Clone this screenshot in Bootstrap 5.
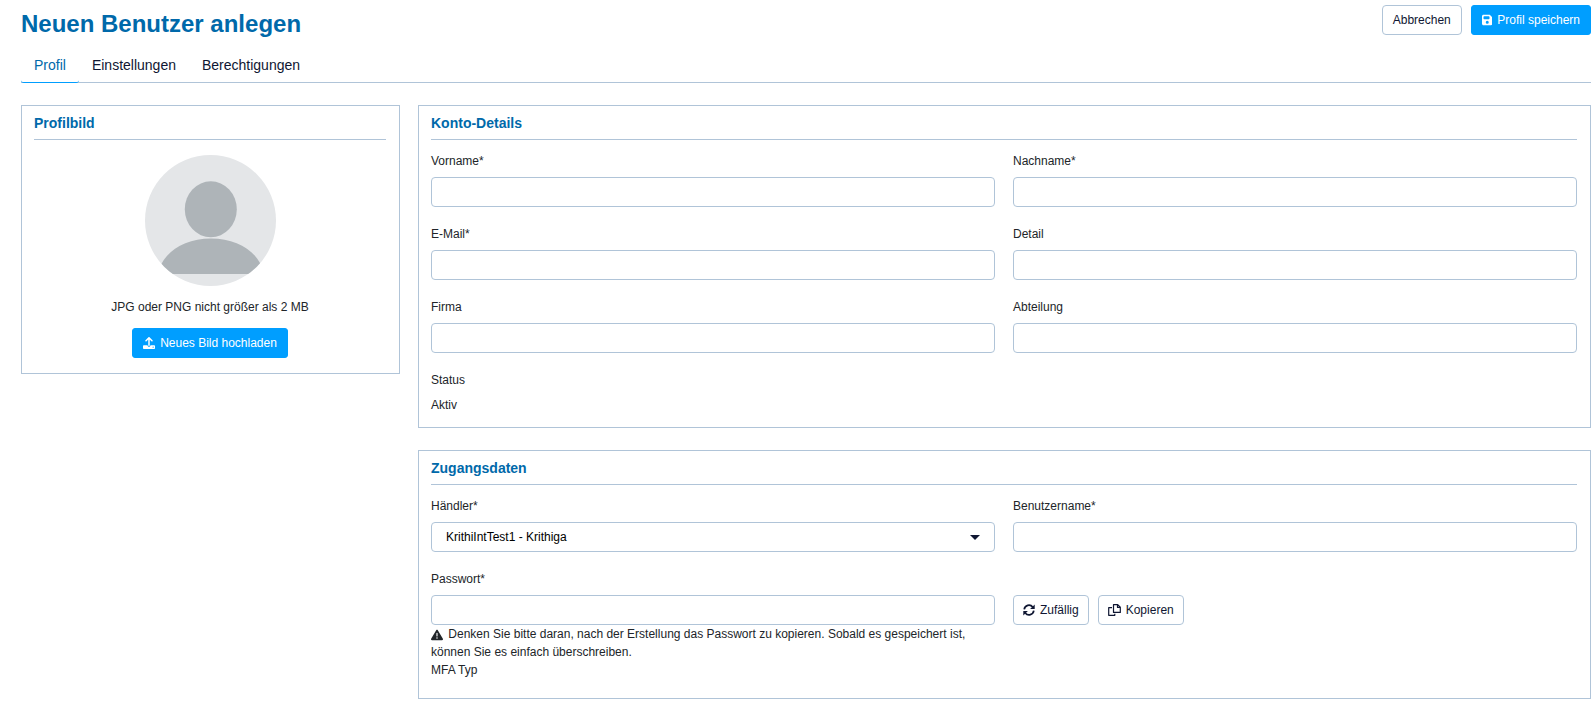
<!DOCTYPE html>
<html lang="de">
<head>
<meta charset="utf-8">
<meta name="viewport" content="width=device-width, initial-scale=1">
<title>Neuen Benutzer anlegen</title>
<link href="https://cdn.jsdelivr.net/npm/bootstrap@5.3.0/dist/css/bootstrap.min.css" rel="stylesheet">
<style>
  :root { --line: #b0c4d8; --brand: #0069aa; --accent: #009eff; --ink: #0f1632; }
  body { font-family: "Liberation Sans", Arial, sans-serif; font-size: 12px; line-height: 18px; color: #212529; }
  .page { padding: 5px 5px 20px 21px; }
  .page-title { font-size: 24px; line-height: 38px; font-weight: 700; color: var(--brand); }
  .btn { --bs-btn-font-size: 12px; --bs-btn-line-height: 18px; --bs-btn-padding-y: 5px; --bs-btn-padding-x: 10px; --bs-btn-border-radius: 4px; display: inline-flex; align-items: center; gap: 5px; }
  .btn-line { --bs-btn-color: var(--ink); --bs-btn-bg: #fff; --bs-btn-border-color: var(--line); --bs-btn-hover-border-color: var(--accent); }
  .btn-accent { --bs-btn-color: #fff; --bs-btn-bg: var(--accent); --bs-btn-border-color: var(--accent); --bs-btn-hover-color: #fff; --bs-btn-hover-bg: #008ae0; --bs-btn-border-radius: 3px; }
  .icon { height: 12px; fill: currentColor; flex: none; }
  .actions { gap: 9px; }
  .tabs { --bs-nav-tabs-border-width: 1px; --bs-nav-tabs-border-color: var(--line); --bs-nav-tabs-border-radius: 3px; margin-bottom: 22px; }
  .tabs .nav-link { border-width: 0 0 1px; padding: 12px 13px 6px; font-size: 14px; line-height: 21px; color: var(--ink); border-radius: 3px; }
  .tabs .nav-link.active { color: var(--brand); background: none; border-color: var(--accent); }
  .cols { --bs-gutter-x: 18px; }
  .panel { border: 1px solid var(--line); padding: 8px 13px 13px 12px; }
  .panel + .panel { margin-top: 22px; }
  .panel-title { font-size: 14px; line-height: 18px; font-weight: 700; color: var(--brand); padding-bottom: 7px; border-bottom: 1px solid var(--line); margin-bottom: 12px; }
  .fields { --bs-gutter-x: 18px; --bs-gutter-y: 18px; }
  .form-label { display: block; margin-bottom: 7px; }
  .form-control, .form-select { height: 30px; font-size: 12px; line-height: 18px; padding: 5px 14px; border-color: var(--line); border-radius: 4px; }
  .form-select { color: #000; background-image: url("data:image/svg+xml,%3Csvg xmlns='http://www.w3.org/2000/svg' viewBox='0 0 10 5'%3E%3Cpath fill='%230f1632' d='M0 0h10L5 5z'/%3E%3C/svg%3E"); background-size: 10px 5px; background-position: right 14px center; }
  .avatar { width: 131px; height: 131px; margin: 3px 0 12px; }
  .upload { margin: 12px 0 2px; }
  .hint-icon { margin-right: 2px; }
  .mfa { margin-bottom: 6px; }
  .pw-actions { padding-top: 25px; }
  .pw-actions .btn { --bs-btn-padding-x: 9px; }
</style>
</head>
<body>
<main class="page">
  <header class="d-flex justify-content-between align-items-start">
    <h1 class="page-title mb-0">Neuen Benutzer anlegen</h1>
    <div class="actions d-flex">
      <button type="button" class="btn btn-line">Abbrechen</button>
      <button type="submit" form="user-form" class="btn btn-accent">
        <svg class="icon" viewBox="0 0 448 512" aria-hidden="true"><path d="M64 32C28.700 32 0 60.700 0 96V416c0 35.300 28.700 64 64 64H384c35.300 0 64-28.700 64-64V173.300c0-17-6.700-33.300-18.700-45.300L352 50.700C340 38.700 323.700 32 306.700 32H64zm0 96c0-17.700 14.300-32 32-32H288c17.700 0 32 14.300 32 32v64c0 17.700-14.300 32-32 32H96c-17.700 0-32-14.300-32-32V128zM224 288a64 64 0 1 1 0 128 64 64 0 1 1 0-128z"/></svg>
        Profil speichern
      </button>
    </div>
  </header>

  <nav>
    <ul class="nav nav-tabs tabs">
      <li class="nav-item"><a class="nav-link active" aria-current="page" href="#profil">Profil</a></li>
      <li class="nav-item"><a class="nav-link" href="#einstellungen">Einstellungen</a></li>
      <li class="nav-item"><a class="nav-link" href="#berechtigungen">Berechtigungen</a></li>
    </ul>
  </nav>

  <form id="user-form" class="row cols align-items-start">
    <div class="col-3">
      <section class="panel">
        <h2 class="panel-title">Profilbild</h2>
        <div class="d-flex flex-column align-items-center">
          <svg class="avatar" viewBox="0 0 131 131" role="img" aria-label="Profilbild">
            <defs><clipPath id="disc"><circle cx="65.500" cy="65.500" r="65.500"/></clipPath></defs>
            <g clip-path="url(#disc)">
              <path fill="#e4e6e8" d="M0 0h131v131H0z"/>
              <ellipse cx="65.800" cy="54.300" rx="26" ry="28" fill="#aeb4b8"/>
              <path fill="#aeb4b8" d="M13 119C17 98 38 83.500 66 83.500S115 98 119 119z"/>
            </g>
          </svg>
          <span>JPG oder PNG nicht größer als 2 MB</span>
          <button type="button" class="btn btn-accent upload">
            <svg class="icon" viewBox="0 0 512 512" aria-hidden="true"><path d="M288 109.300V352c0 17.700-14.300 32-32 32s-32-14.300-32-32V109.300l-73.400 73.400c-12.500 12.500-32.800 12.500-45.300 0s-12.500-32.800 0-45.300l128-128c12.500-12.500 32.800-12.500 45.300 0l128 128c12.500 12.500 12.500 32.800 0 45.300s-32.800 12.500-45.300 0L288 109.300zM32 352H192c0 35.300 28.700 64 64 64s64-28.700 64-64H480c17 0 32 14 32 32v96c0 17-14 32-32 32H32c-17 0-32-14-32-32V384c0-17 14-32 32-32zM432 456a24 24 0 1 0 0-48 24 24 0 1 0 0 48z"/></svg>
            Neues Bild hochladen
          </button>
        </div>
      </section>
    </div>

    <div class="col-9">
      <section class="panel">
        <h2 class="panel-title">Konto-Details</h2>
        <div class="d-grid">
          <div class="row fields">
            <div class="col-6"><label class="form-label" for="vorname">Vorname*</label><input class="form-control" id="vorname" type="text" required></div>
            <div class="col-6"><label class="form-label" for="nachname">Nachname*</label><input class="form-control" id="nachname" type="text" required></div>
            <div class="col-6"><label class="form-label" for="email">E-Mail*</label><input class="form-control" id="email" type="email" required></div>
            <div class="col-6"><label class="form-label" for="detail">Detail</label><input class="form-control" id="detail" type="text"></div>
            <div class="col-6"><label class="form-label" for="firma">Firma</label><input class="form-control" id="firma" type="text"></div>
            <div class="col-6"><label class="form-label" for="abteilung">Abteilung</label><input class="form-control" id="abteilung" type="text"></div>
            <div class="col-6"><label class="form-label" for="status">Status</label><output class="d-block" id="status">Aktiv</output></div>
          </div>
        </div>
      </section>

      <section class="panel">
        <h2 class="panel-title">Zugangsdaten</h2>
        <div class="d-grid">
          <div class="row fields">
            <div class="col-6"><label class="form-label" for="haendler">Händler*</label><select class="form-select" id="haendler"><option>KrithiIntTest1 - Krithiga</option></select></div>
            <div class="col-6"><label class="form-label" for="benutzername">Benutzername*</label><input class="form-control" id="benutzername" type="text" required></div>
            <div class="col-6">
              <label class="form-label" for="passwort">Passwort*</label><input class="form-control" id="passwort" type="password" required>
              <div><svg class="icon hint-icon" viewBox="0 0 512 512" aria-hidden="true"><path d="M256 32c14.200 0 27.300 7.500 34.500 19.800l216 368c7.300 12.400 7.300 27.700 .2 40.100S486.300 480 472 480H40c-14.300 0-27.600-7.700-34.700-20.100s-7-27.800 .2-40.100l216-368C228.700 39.500 241.800 32 256 32zm0 128c-13.300 0-24 10.700-24 24V296c0 13.300 10.700 24 24 24s24-10.700 24-24V184c0-13.300-10.700-24-24-24zm32 224a32 32 0 1 0 -64 0 32 32 0 1 0 64 0z"/></svg>
              Denken Sie bitte daran, nach der Erstellung das Passwort zu kopieren. Sobald es gespeichert ist, können Sie es einfach überschreiben.</div>
              <div class="mfa">MFA Typ</div>
            </div>
            <div class="col-6">
              <div class="pw-actions actions d-flex">
                <button type="button" class="btn btn-line">
                  <svg class="icon" viewBox="0 0 12 12" aria-hidden="true"><path fill="none" stroke="currentColor" stroke-width="1.700" d="M1.200 5.300A4.800 4.800 0 0 1 9.700 3M10.800 6.700A4.800 4.800 0 0 1 2.300 9"/><path d="M11.700.5v4.600H7.100zM.3 11.500V6.900h4.600z"/></svg>
                  Zufällig
                </button>
                <button type="button" class="btn btn-line">
                  <svg class="icon" viewBox="0 0 13 12" aria-hidden="true"><path fill="none" stroke="currentColor" stroke-width="1.200" stroke-linejoin="round" d="M5.500.6h4.200l2.600 2.600v5.200H5.500zM9.500.6v2.800h2.800M4 3.600H.7v7.700h6.100v-1.500"/></svg>
                  Kopieren
                </button>
              </div>
            </div>
          </div>
        </div>
      </section>
    </div>
  </form>
</main>
<script src="https://cdn.jsdelivr.net/npm/bootstrap@5.3.0/dist/js/bootstrap.bundle.min.js"></script>
</body>
</html>
